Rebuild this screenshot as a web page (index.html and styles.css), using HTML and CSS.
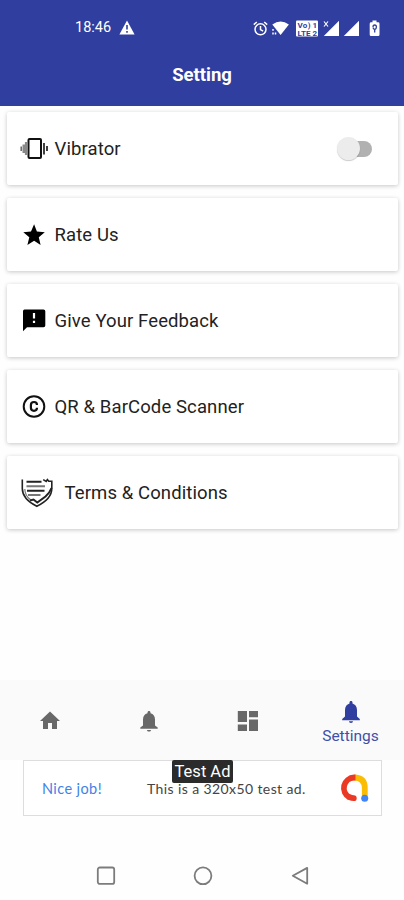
FILE: index.html
```html
<!DOCTYPE html>
<html lang="en">
<head>
<meta charset="utf-8">
<title>Setting</title>
<link rel="stylesheet" href="styles.css">
</head>
<body>
<header class="header">
	<div class="status">
		<span class="time">18:46</span>
		<svg class="warn" width="16" height="15" viewBox="0 0 16 15"><path fill="#fff" d="M8 .5 15.6 14.5H.4z"/><path stroke="#303f9f" stroke-width="1.6" d="M8 5v4.5M8 11v1.7"/></svg>
		<svg class="tray" width="128" height="18" viewBox="253 18 128 18">
			<g fill="none" stroke="#fff" stroke-width="1.5">
				<circle cx="260.5" cy="28.3" r="5.5"/>
				<path d="M260.5 25v3.6l2.6 1.6M253.8 23.6l3-2.6M267.2 23.6l-3-2.6"/>
			</g>
			<path fill="#fff" d="M272.3 23.6q8.3-6.4 16.6 0L280.6 34z"/>
			<path stroke="#fff" stroke-width="1.5" d="M273 28v1.7M273 31.5v2M275.5 31.5v2"/>
			<rect x="296" y="19.5" width="22" height="16" rx="1" fill="#fff"/>
			<g class="lte"><text x="297.5" y="27" textLength="13">Vo)</text><text x="297.5" y="34.5" textLength="13">LTE</text><text x="312.5" y="27">1</text><text x="312.5" y="34.5">2</text></g>
			<path fill="#fff" d="M339 19.8V35h-15.2zM359 19.8V35h-15.2z"/>
			<path stroke="#303f9f" stroke-width="3" d="M323 19l6 7"/>
			<path stroke="#fff" stroke-width="1.2" d="M324 20.5l4 5M328 20.5l-4 5"/>
			<path fill="#fff" d="M372.500 19.500h4v1.800h1.600q1.400 0 1.400 1.400v11q0 1.300-1.400 1.300h-7q-1.400 0-1.400-1.300v-11q0-1.400 1.400-1.400h1.400z"/>
			<path fill="none" stroke="#303f9f" stroke-width="1.3" d="M373 26q0-2 1.700-2t1.700 2-1.700 2.700v2.800M373 26.500q.3 1.500 1.700 2"/>
		</svg>
	</div>
	<h1>Setting</h1>
</header>

<main class="list">
	<div class="card">
		<svg class="icon" width="28" height="24" viewBox="20 137 28 24">
			<rect x="28.5" y="139" width="12.5" height="19" rx="1" fill="none" stroke="#111" stroke-width="2"/>
			<path stroke="#888" stroke-width="2.600" d="M26.200 142v13M23.800 144.500v8.500"/><path stroke="#666" stroke-width="1.500" d="M21.200 146.500v4.500"/>
			<path stroke="#111" stroke-width="1.600" d="M44 143v11.500M47 146v5"/>
		</svg>
		<span class="label">Vibrator</span>
		<span class="switch"></span>
	</div>
	<div class="card">
		<svg class="icon" width="28" height="24" viewBox="-2.1 0 28 24"><path d="M12 17.8 18.5 22l-1.8-7.7 6-5.1-7.9-.7L12 1.3 8.900 8.500l-7.700.7 6 5.100L5.300 22z"/></svg>
		<span class="label">Rate Us</span>
	</div>
	<div class="card">
		<svg class="icon" width="28" height="24" viewBox="20 309 28 24"><path d="M24.500 309.500h19q1.800 0 1.800 1.800v14.200q0 1.800-1.800 1.800H27l-4 4v-20q0-1.800 1.500-1.800z"/><path stroke="#fff" stroke-width="2.200" d="M34 313v5.500M34 320.700v2.200"/></svg>
		<span class="label">Give Your Feedback</span>
	</div>
	<div class="card">
		<svg class="icon" width="28" height="24" viewBox="20 395 28 24" fill="none" stroke="#111" stroke-width="2"><circle cx="34" cy="406.500" r="10.300"/><path stroke-width="2.200" d="M37 405q0-3-3-3-3.100 0-3.100 3v2.800q0 3 3.100 3 3 0 3-3"/></svg>
		<span class="label">QR &amp; BarCode Scanner</span>
	</div>
	<div class="card">
		<svg class="icon shield" width="34" height="30" viewBox="20 477 34 30" fill="none" stroke="#222" stroke-width="1.600">
			<path d="M22.300 478.500v9q0 10.500 14.500 17.800 15-7.300 15-17.800v-7.300h-3l-1.400-1.600-1.200 1.900-3-1.900"/>
			<path stroke="#777" stroke-width="1.200" d="M24.800 488q.2 7 5.800 10.800"/>
			<path stroke-width="2" d="M51.500 487q-1.500 4.500-6 8.500l-8.200 6-3.800-3-3.500 1"/>
			<path stroke-width="2" d="M26.500 480.800h15M27 489.700h17.500"/><path stroke="#777" stroke-width="2" d="M26.500 485.200h18.500M28 494h12.500"/>
		</svg>
		<span class="label terms">Terms &amp; Conditions</span>
	</div>
</main>

<nav class="tabs">
	<a class="tab"><svg width="24" height="24" viewBox="0 0 24 24"><path d="M10 20v-6h4v6h5v-8h3L12 2.500 2 12h3v8z"/></svg></a>
	<a class="tab"><svg width="24" height="24" viewBox="0 0 24 24"><path d="M12 22.500c1.100 0 2-.7 2-1.600h-4c0 .9.900 1.600 2 1.600zM18 16.500V10.500c0-3.200-1.600-5.500-4.500-6.200v-.8c0-.9-.7-1.500-1.500-1.500s-1.500.6-1.500 1.500v.8C7.600 5 6 7.300 6 10.500v6l-2.700 2v1.200h17.400v-1.200z"/></svg></a>
	<a class="tab"><svg width="24" height="24" viewBox="0 0 24 24"><path d="M1.800 2H11v11H1.800zM13 2h9v6.300h-9zM1.800 15.500H11V22H1.800zM13 10.600h9V22h-9z"/></svg></a>
	<a class="tab active"><svg width="24" height="24" viewBox="0 0 24 24"><path d="M12 23c1.100 0 2-.7 2-1.700h-4c0 1 .9 1.700 2 1.700zM18 16.500V10c0-3.200-1.700-5.700-4.500-6.500v-.9C13.500 1.700 13 1 12 1s-1.500.7-1.500 1.600v.9C7.700 4.300 6 6.800 6 10v6.500L3.200 19v1.200h17.600V19z"/></svg><span>Settings</span></a>
</nav>

<div class="ad">
	<span class="nice">Nice job!</span>
	<span class="adtext">This is a 320x50 test ad.</span>
	<svg class="admob" width="30" height="30" viewBox="340 773 30 30" fill="none" stroke-width="5.800">
		<path stroke="#fbbc04" d="M354.200 777.500q10.600.2 10.600 10.500v8"/>
		<path stroke="#ea3a25" d="M355.500 777.500h-1.300a10.600 10.600 0 0 0-4.600 20"/>
		<path stroke="#ea3a25" stroke-linecap="round" d="M349.500 797.200q2.200 1 4.300 1"/>
		<circle cx="364.700" cy="798.300" r="3.500" fill="#4285f4"/>
	</svg>
	<span class="badge">Test Ad</span>
</div>

<footer class="sysnav">
	<svg width="20" height="20" viewBox="0 0 20 20"><rect x="1.800" y="1.500" width="16.400" height="16.400" rx="2"/></svg>
	<svg width="20" height="20" viewBox="0 0 20 20"><circle cx="10" cy="9.800" r="8.400"/></svg>
	<svg width="20" height="20" viewBox="0 0 20 20"><path d="M2.800 9.800 17.200 1.900v15.800z" stroke-linejoin="round"/></svg>
</footer>
</body>
</html>
```

FILE: styles.css
```css
body {
	margin: 0;
	width: 404px;
	height: 900px;
	overflow: hidden;
	background-color: #fefefe;
	font-family: Roboto, sans-serif;
	color: #222;
}
.header {
	height: 105.5px;
	background-color: #303f9f;
	color: #fff;
}
.status {
	display: flex;
	align-items: center;
	height: 55px;
	padding-left: 75px;
}
.time {
	width: 37px;
	font-size: 14.5px;
}
.warn {
	margin-left: 7px;
}
.tray {
	margin-left: 118px;
}
.lte text {
	font-size: 8px;
	font-weight: bold;
	fill: #303f9f;
}
h1 {
	margin: 9px 0 0;
	font-size: 18.5px;
	line-height: 22px;
	font-weight: bold;
	text-align: center;
}
.list {
	display: flex;
	flex-direction: column;
	gap: 13px;
	height: 568px;
	padding: 6.5px 6px 0 7px;
	box-sizing: border-box;
}
.card {
	display: flex;
	align-items: center;
	height: 73px;
	padding: 0 26px 0 13px;
	box-sizing: border-box;
	border-radius: 2px;
	background-color: #fff;
	box-shadow: 0 1px 4px rgba(0, 0, 0, .22);
}
.icon {
	flex: none;
}
.label {
	margin-left: 6.5px;
	font-size: 18.5px;
	line-height: 24px;
	letter-spacing: .11px;
	white-space: nowrap;
}
.shield {
	margin-right: 4px;
}
.terms {
	margin-left: 6.5px;
}
.switch {
	position: relative;
	width: 32px;
	height: 16px;
	margin-left: auto;
	border-radius: 8px;
	background-color: #b1b1b1;
}
.switch::before {
	content: "";
	position: absolute;
	left: -3px;
	top: -4px;
	width: 23px;
	height: 23px;
	border-radius: 50%;
	background-color: #ececec;
	box-shadow: 0 1px 1px rgba(0, 0, 0, .2);
}
.tabs {
	display: grid;
	grid-template-columns: 99px 99px 99px 107px;
	height: 80px;
	margin-top: 6.5px;
	background-color: #fafafa;
}
.tab {
	display: flex;
	flex-direction: column;
	align-items: center;
	justify-content: center;
	padding-top: 1px;
	fill: #686868;
}
.active {
	padding-top: 5px;
	fill: #303f9f;
	color: #4150a8;
	font-size: 15.5px;
	line-height: 20px;
}
.active span {
	margin-top: 2px;
}
.ad {
	position: relative;
	display: flex;
	align-items: center;
	width: 359px;
	height: 56px;
	margin-left: 23px;
	padding-left: 18px;
	box-sizing: border-box;
	border: 1px solid #ddd;
	background-color: #fff;
	font-family: Lato, sans-serif;
	font-size: 14px;
	color: #444;
}
.nice {
	width: 105px;
	color: #3f82e8;
	font-size: 14.5px;
	letter-spacing: .4px;
}
.adtext {
	width: 193px;
	letter-spacing: .4px;
	white-space: nowrap;
}
.badge {
	position: absolute;
	left: 148px;
	top: -1px;
	width: 61px;
	height: 23px;
	border-radius: 2px;
	background-color: #2b2b2b;
	color: #fff;
	font-family: Roboto, sans-serif;
	font-size: 16.5px;
	line-height: 24px;
	text-align: center;
	white-space: nowrap;
}
.sysnav {
	display: flex;
	justify-content: center;
	gap: 77px;
	padding: 50px 0 0 1px;
	fill: none;
	stroke: #7c7c7c;
	stroke-width: 1.8;
}
```
